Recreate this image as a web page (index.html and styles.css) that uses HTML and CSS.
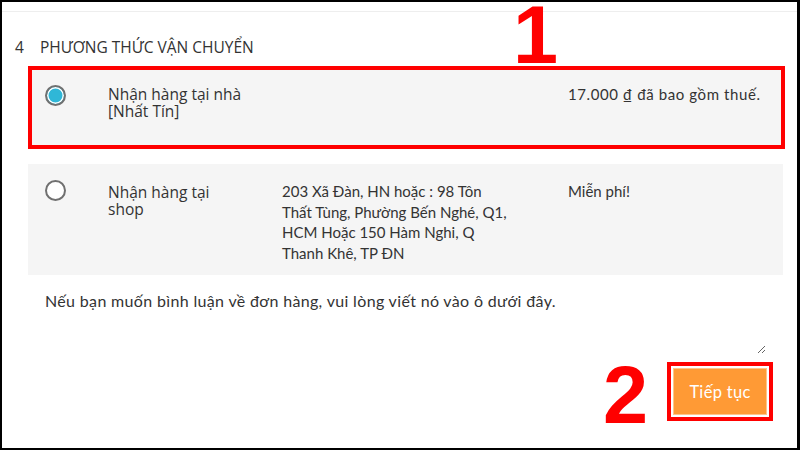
FILE: index.html
```html
<!DOCTYPE html>
<html lang="vi">
<head>
<meta charset="utf-8">
<title>Phương thức vận chuyển</title>
<link rel="stylesheet" href="styles.css">
</head>
<body>
<div class="frame">
  <div class="topline"></div>
  <h2 class="step"><span class="step-no">4</span><span class="step-title">PHƯƠNG THỨC VẬN CHUYỂN</span></h2>
  <div class="options">
    <div class="option highlight">
      <div class="radio-cell"><span class="radio checked"></span></div>
      <div class="name">Nhận hàng tại nhà<br>[Nhất Tín]</div>
      <div class="addr"></div>
      <div class="price wide">17.000 ₫ đã bao gồm thuế.</div>
    </div>
    <div class="option tall">
      <div class="radio-cell"><span class="radio"></span></div>
      <div class="name">Nhận hàng tại<br>shop</div>
      <div class="addr">203 Xã Đàn, HN hoặc : 98 Tôn<br>Thất Tùng, Phường Bến Nghé, Q1,<br>HCM Hoặc 150 Hàm Nghi, Q<br>Thanh Khê, TP ĐN</div>
      <div class="price">Miễn phí!</div>
    </div>
  </div>
  <p class="comment-label">Nếu bạn muốn bình luận về đơn hàng, vui lòng viết nó vào ô dưới đây.</p>
  <textarea class="comment" aria-label="Bình luận"></textarea>
  <div class="actions">
    <button class="next" type="button">Tiếp tục</button>
  </div>
  <span class="mark mark-1">1</span>
  <span class="mark mark-2">2</span>
</div>
</body>
</html>
```
FILE: styles.css
```css
* { box-sizing: border-box; }
html, body { margin: 0; padding: 0; background: #fff; }
.frame {
  position: relative;
  width: 800px;
  height: 450px;
  border: 2px solid #000;
  border-right-width: 3px;
  overflow: hidden;
  font-family: Lato, "Noto Sans", sans-serif;
  color: #333;
}
.topline {
  height: 10px;
  border-bottom: 1px solid #eeeeee;
}
.step {
  margin: 25px 0 0 13px;
  height: 20px;
  line-height: 20px;
  font-family: "Open Sans", sans-serif;
  font-weight: 400;
  font-size: 15.5px;
  color: #333;
  display: flex;
}
.step-no { width: 25px; }
.options {
  margin: 9px 0 0 26px;
  width: 755px;
  display: flex;
  flex-direction: column;
  gap: 15px;
}
.option {
  position: relative;
  background: #f5f5f5;
  height: 83px;
  display: grid;
  grid-template-columns: 80px 174px 286px 1fr;
  padding-top: 18px;
}
.option.tall { height: 111px; padding-top: 16px; }
.highlight::after {
  content: "";
  position: absolute;
  top: 0; left: 0; right: -2px; bottom: 0;
  border: 4px solid #ff0000;
}
.radio-cell { padding-left: 17px; }
.option.highlight .radio-cell { padding-top: 1px; }
.radio {
  display: block;
  width: 21px;
  height: 21px;
  border-radius: 50%;
  border: 2px solid #707070;
  background: #fff;
}
.radio.checked {
  background: #2fb7d7;
  box-shadow: inset 0 0 0 1.5px #fff;
}
.name {
  font-family: "Open Sans", sans-serif;
  font-size: 15.5px;
  line-height: 17px;
  padding-top: 2px;
}
.addr, .price {
  font-size: 15px;
  line-height: 20.5px;
}
.price.wide { letter-spacing: 0.6px; }
.option.tall .name { padding-top: 4px; }
.option.tall .addr, .option.tall .price { padding-top: 1px; }
.comment-label {
  margin: 16px 0 0 43px;
  font-size: 16px;
  letter-spacing: 0.34px;
  line-height: 20px;
}
.comment {
  display: block;
  margin: 10px 0 0 43px;
  width: 721px;
  height: 33px;
  border: none;
  outline: none;
  background: #fff;
  resize: both;
  font-family: inherit;
}
.actions {
  display: flex;
  justify-content: flex-end;
  padding-right: 30px;
  margin-top: 14px;
}
.next {
  width: 94px;
  height: 47px;
  background: #ff9a35;
  border: 1px solid #ffc48a;
  color: #fff;
  font-family: Lato, sans-serif;
  font-size: 16.5px;
  letter-spacing: 0.3px;
  outline: 4px solid #ff0000;
  outline-offset: 2px;
  padding: 0;
}
.mark {
  position: absolute;
  font-family: "Liberation Sans", Arial, sans-serif;
  font-weight: 700;
  font-size: 81px;
  line-height: 58px;
  color: #ff0000;
}
.mark-1 { left: 511px; top: 4px; }
.mark-2 { left: 601px; top: 364px; }
```
